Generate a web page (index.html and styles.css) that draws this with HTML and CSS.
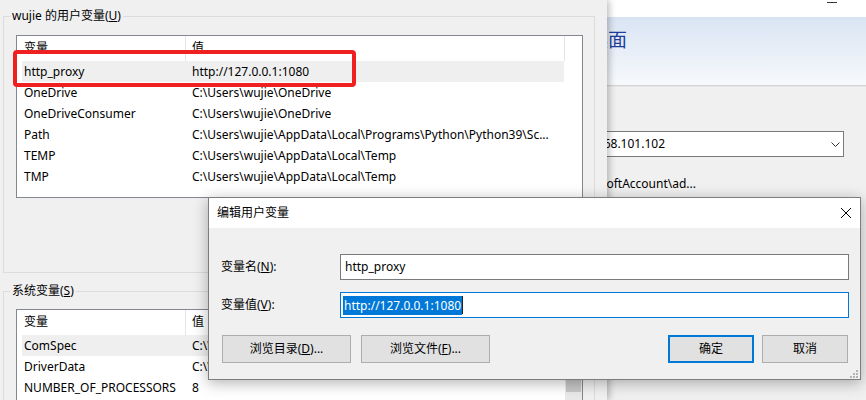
FILE: index.html
```html
<!DOCTYPE html>
<html lang="zh-CN">
<head>
<meta charset="utf-8">
<title>编辑用户变量</title>
<link rel="stylesheet" href="styles.css">
</head>
<body>
<div class="desk">
  <section class="win-back">
    <div class="wb-top"><span class="min-glyph"></span></div>
    <div class="wb-head"><span class="wb-title">远程桌面</span></div>
    <div class="wb-sep"></div>
    <div class="wb-body">
      <div class="combo">
        <span class="combo-text">192.168.101.102</span>
        <svg class="chev" width="9" height="5" viewBox="0 0 9 5"><polyline points="0.5,0.5 4.5,4.5 8.5,0.5" fill="none" stroke="#333" stroke-width="1"/></svg>
      </div>
      <div class="acct"><span>MicrosoftAccount\ad...</span></div>
    </div>
  </section>

  <section class="win-env">
    <fieldset class="group group-user">
      <legend>wujie 的用户变量(<u>U</u>)</legend>
      <div class="list list-user">
        <div class="list-main">
          <div class="list-head"><div class="hcell hcell-name">变量</div><div class="hcell hcell-val">值</div></div>
          <div class="row sel"><span class="c-name">http_proxy</span><span class="c-val">http://127.0.0.1:1080</span></div>
          <div class="row"><span class="c-name">OneDrive</span><span class="c-val">C:\Users\wujie\OneDrive</span></div>
          <div class="row"><span class="c-name">OneDriveConsumer</span><span class="c-val">C:\Users\wujie\OneDrive</span></div>
          <div class="row"><span class="c-name">Path</span><span class="c-val">C:\Users\wujie\AppData\Local\Programs\Python\Python39\Sc...</span></div>
          <div class="row"><span class="c-name">TEMP</span><span class="c-val">C:\Users\wujie\AppData\Local\Temp</span></div>
          <div class="row"><span class="c-name">TMP</span><span class="c-val">C:\Users\wujie\AppData\Local\Temp</span></div>
        </div>
      </div>
    </fieldset>

    <fieldset class="group group-sys">
      <legend>系统变量(<u>S</u>)</legend>
      <div class="list list-sys">
        <div class="list-main">
          <div class="list-head"><div class="hcell hcell-name">变量</div><div class="hcell hcell-val">值</div></div>
          <div class="row sel"><span class="c-name">ComSpec</span><span class="c-val">C:\Windows\system32\cmd.exe</span></div>
          <div class="row"><span class="c-name">DriverData</span><span class="c-val">C:\Windows\System32\Drivers\DriverData</span></div>
          <div class="row"><span class="c-name">NUMBER_OF_PROCESSORS</span><span class="c-val">8</span></div>
        </div>
        <div class="vscroll"><div class="vs-arrow"></div><div class="vs-thumb"></div></div>
      </div>
    </fieldset>

    <div class="callout"></div>
  </section>

  <section class="dlg">
    <header class="dlg-title">
      <span>编辑用户变量</span>
      <svg class="close-x" width="10" height="10" viewBox="0 0 10 10"><path d="M0 0 L10 10 M10 0 L0 10" stroke="#000" stroke-width="1"/></svg>
    </header>
    <div class="dlg-body">
      <div class="form">
        <label class="flabel">变量名(<u>N</u>):</label>
        <div class="field">http_proxy</div>
        <label class="flabel">变量值(<u>V</u>):</label>
        <div class="field focus"><span class="seltext">http://127.0.0.1:1080</span><span class="caret"></span></div>
      </div>
      <div class="btns">
        <button class="btn btn-wide"><span class="btn-label">浏览目录(<u>D</u>)...</span></button>
        <button class="btn btn-wide"><span class="btn-label">浏览文件(<u>F</u>)...</span></button>
        <span class="spacer"></span>
        <button class="btn btn-small btn-default"><span class="btn-label">确定</span></button>
        <button class="btn btn-small"><span class="btn-label">取消</span></button>
      </div>
    </div>
    <svg class="grip" width="8" height="8" viewBox="0 0 8 8" fill="#b4b4b4">
      <rect x="6" y="0" width="2" height="2"/>
      <rect x="3" y="3" width="2" height="2"/><rect x="6" y="3" width="2" height="2"/>
      <rect x="0" y="6" width="2" height="2"/><rect x="3" y="6" width="2" height="2"/><rect x="6" y="6" width="2" height="2"/>
    </svg>
  </section>
</div>
</body>
</html>
```
FILE: styles.css
```css
* { box-sizing: border-box; }
html, body { margin: 0; padding: 0; }
body {
  width: 866px;
  height: 400px;
  overflow: hidden;
  background: #f0f0f0;
  font-family: "Noto Sans", "Noto Sans CJK SC", sans-serif;
  font-size: 12px;
  line-height: 16px;
  color: #000;
}
.desk { position: relative; width: 866px; height: 400px; overflow: hidden; }

/* background window on the right */
.win-back {
  position: absolute;
  left: 540px;
  top: 0;
  width: 326px;
  height: 400px;
  background: #f0f0f0;
}
.wb-top { height: 17px; background: #fff; display: flex; justify-content: flex-end; }
.min-glyph { width: 10px; height: 1px; background: #333; margin: 2px 29px 0 0; }
.wb-head {
  height: 68px;
  background: linear-gradient(#d9e4f3, #f7f9fc);
  padding: 11px 0 0 11px;
}
.wb-title { font-size: 19px; line-height: 24px; color: #1d3f9b; }
.wb-sep { height: 2px; border-top: 1px solid #d4d4d4; border-bottom: 1px solid #e6e6e6; }
.wb-body { padding: 44px 23px 0 25px; }
.combo {
  width: 279px;
  height: 26px;
  border: 1px solid #7a7a7a;
  background: #fff;
  display: flex;
  align-items: center;
  justify-content: space-between;
  padding: 0 3px 0 7px;
  white-space: nowrap;
}
.chev { display: block; }
.acct {
  margin-top: 19px;
  width: 131px;
  display: flex;
  justify-content: flex-end;
  white-space: nowrap;
}

/* environment variables window */
.win-env {
  position: absolute;
  left: 0;
  top: 0;
  width: 607px;
  height: 400px;
  background: #f0f0f0;
  box-shadow: 2px 0 7px rgba(0, 0, 0, 0.28);
  padding: 9px 0 0 3px;
}
.group {
  margin: 0;
  padding: 0;
  border: 1px solid #dcdcdc;
  width: 592px;
  min-width: 0;
}
.group legend { margin-left: 6px; padding: 0 2px; line-height: 14px; }
.group-user { padding-bottom: 74px; }
.group-sys { margin-top: 11px; }

.list {
  margin: 12px 0 0 12px;
  width: 567px;
  height: 163px;
  border: 1px solid #828790;
  background: #fff;
  display: flex;
}
.list-sys { margin-top: 11px; height: 140px; }
.list-main { width: 548px; }
.list-head { display: flex; height: 25px; }
.hcell { border-right: 1px solid #e5e5e5; line-height: 24px; padding-left: 7px; }
.hcell-name { width: 169px; }
.hcell-val { width: 379px; padding-left: 6px; }
.row {
  display: flex;
  margin-left: 5px;
  width: 542px;
  height: 21px;
  line-height: 21px;
  white-space: nowrap;
}
.row.sel { background: #efefef; }
.c-name { width: 170px; flex: none; padding-left: 2px; }
.c-val { overflow: hidden; }

.vscroll { width: 17px; background: #e9e9e9; display: flex; flex-direction: column; }
.vs-arrow { height: 17px; }
.vs-thumb { margin: 0 1px; height: 65px; background: #c8c8c8; }

.callout {
  position: absolute;
  left: 13px;
  top: 50px;
  width: 343px;
  height: 37px;
  border: 4px solid #ee2020;
  border-radius: 4px;
}

/* edit dialog */
.dlg {
  position: absolute;
  left: 208px;
  top: 197px;
  width: 653px;
  height: 183px;
  border: 1px solid #7d7d7d;
  background: #f0f0f0;
  box-shadow: 0 3px 14px rgba(0, 0, 0, 0.3);
}
.dlg-title {
  height: 30px;
  background: #fff;
  display: flex;
  align-items: center;
  justify-content: space-between;
  padding: 0 9px 0 8px;
}
.close-x { display: block; }
.dlg-body { padding: 26px 11px 16px 12px; }
.form {
  display: grid;
  grid-template-columns: 119px 1fr;
  row-gap: 12px;
  align-items: center;
}
.field {
  height: 26px;
  border: 1px solid #7a7a7a;
  background: #fff;
  padding-left: 4px;
  display: flex;
  align-items: center;
  white-space: nowrap;
}
.field.focus { border-color: #0078d7; padding-left: 2px; }
.seltext { background: #0078d7; color: #fff; line-height: 19px; padding: 0 1px; }
.caret { width: 1px; height: 18px; background: #222; }
.btns { display: flex; margin: 17px 1px 0; gap: 10px; }
.spacer { flex: 1; }
.btn {
  height: 28px;
  border: 1px solid #adadad;
  background: #e1e1e1;
  font-family: inherit;
  font-size: 12px;
  color: #000;
  padding: 0;
  display: flex;
  align-items: center;
  justify-content: center;
}
.btn-label { display: block; line-height: 16px; white-space: nowrap; }
.btn-wide { width: 129px; }
.btn-small { width: 86px; }
.btn-small + .btn-small { margin-left: -2px; }
.btn-default { border: 2px solid #0078d7; }
.grip { position: absolute; right: 2px; bottom: 1px; }
```
